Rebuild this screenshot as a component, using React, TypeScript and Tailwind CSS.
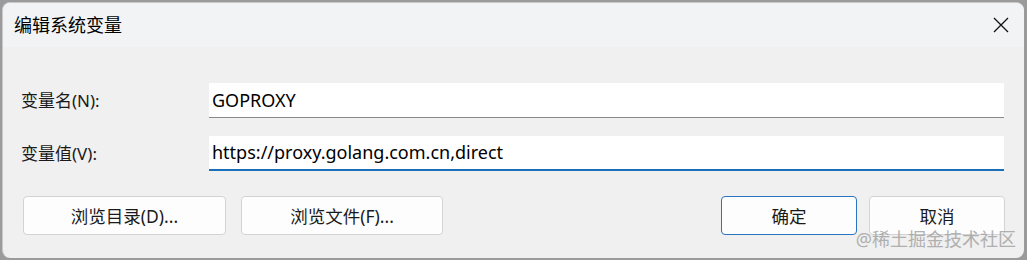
import React from "react";

const font = { fontFamily: '"Noto Sans", "Noto Sans CJK SC", sans-serif' };

const Field = ({ label, value, active }: { label: string; value: string; active?: boolean }) => (
  <div className="flex items-center">
    <div className="w-[206px] pl-[18px] text-[17px] text-[#1a1a1a]">{label}</div>
    <div
      className={
        "w-[795px] h-[35px] bg-white flex items-center pl-[3px] text-[18px] text-black " +
        (active ? "border-b-2 border-[#1b6fb8]" : "border-b border-[#8a8a8a]")
      }
    >
      {value}
    </div>
  </div>
);

const Btn = ({ text, w, primary }: { text: string; w: string; primary?: boolean }) => (
  <button
    className={
      "h-[39px] rounded-[4px] bg-[#fdfdfd] text-[17.5px] leading-[20px] text-[#1a1a1a] flex items-center justify-center border " +
      w +
      (primary ? " border-[#2a73c0]" : " border-[#d3d3d3]")
    }
  >
    {text}
  </button>
);

export default function App() {
  return (
    <div className="w-[1027px] h-[260px] bg-[#9b9b9b] pl-[2px] pt-[2px] overflow-hidden" style={font}>
      <div className="relative w-[1022px] h-[256px] rounded-[8px] bg-[#f0f0f0] border-l border-t border-[#c8c8c8] overflow-hidden">
        <div className="h-[44px] bg-[#f2f3f5] flex items-center justify-between pl-[11px] pr-[14px]">
          <span className="text-[18px] text-black">编辑系统变量</span>
          <svg width="16" height="16" viewBox="0 0 16 16" className="mr-[1px]">
            <path d="M1 1 L15 15 M15 1 L1 15" stroke="#111" strokeWidth="1.3" />
          </svg>
        </div>
        <div className="pt-[36px] flex flex-col gap-[18px]">
          <Field label="变量名(N):" value="GOPROXY" />
          <Field label="变量值(V):" value="https://proxy.golang.com.cn,direct" active />
        </div>
        <div className="mt-[25px] flex pl-[20px]">
          <Btn text="浏览目录(D)..." w="w-[203px]" />
          <div className="w-[15px]" />
          <Btn text="浏览文件(F)..." w="w-[202px]" />
          <div className="w-[278px]" />
          <Btn text="确定" w="w-[136px]" primary />
          <div className="w-[12px]" />
          <Btn text="取消" w="w-[136px]" />
        </div>
        <div className="absolute right-[8px] bottom-[10px] text-[18px] leading-[18px] text-[#a0a0a0] opacity-80">@稀土掘金技术社区</div>
      </div>
    </div>
  );
}
